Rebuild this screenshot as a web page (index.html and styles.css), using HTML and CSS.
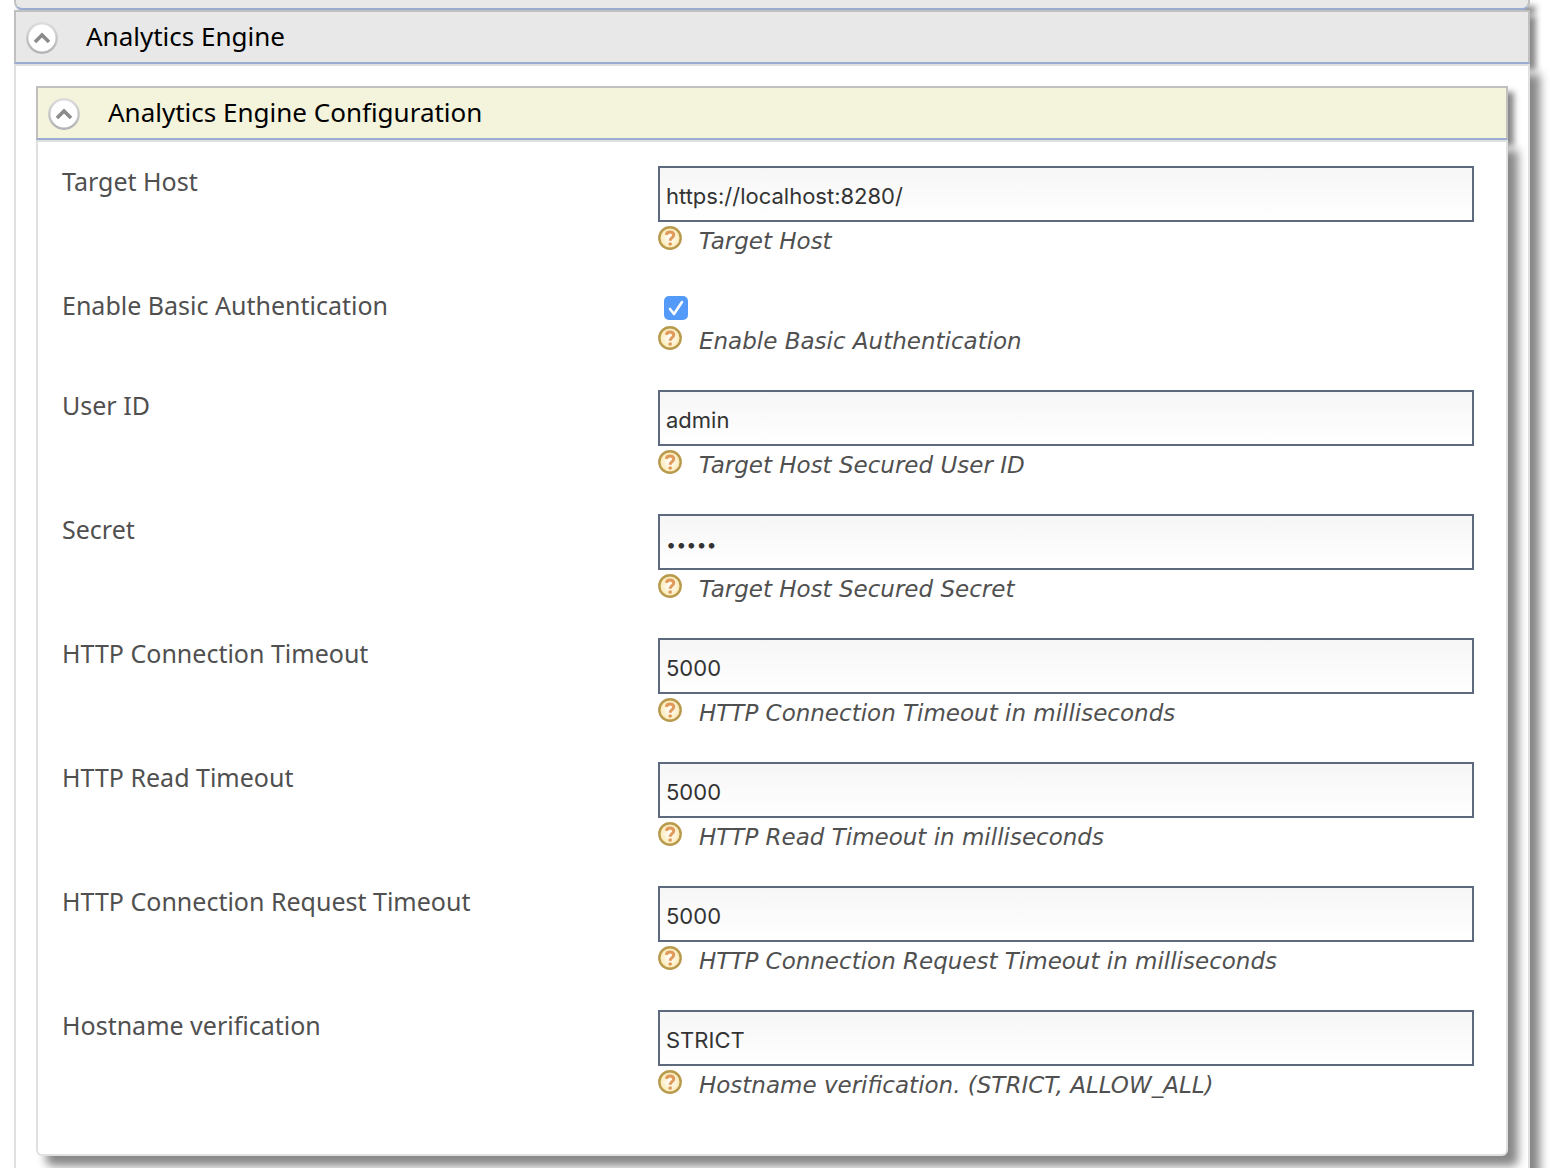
FILE: index.html
```
<!DOCTYPE html>
<html lang="en">
<head>
<meta charset="utf-8">
<title>Analytics Engine</title>
<link rel="stylesheet" href="styles.css">
</head>
<body>
<svg class="sprite" aria-hidden="true">
  <defs>
    <linearGradient id="ring" x1="0" y1="0" x2="0" y2="1"><stop offset="0" stop-color="#dcdcdc"/><stop offset="1" stop-color="#b2b3b6"/></linearGradient>
    <radialGradient id="gold"><stop offset="0" stop-color="#fff"/><stop offset="1" stop-color="#fbe9b0"/></radialGradient>
  </defs>
  <symbol id="collapse" viewBox="0 0 32 32">
    <circle cx="16" cy="16" r="14.7" fill="#fff" stroke="url(#ring)" stroke-width="2.4"/>
    <path d="M9 20 16 13 23 20" fill="none" stroke="#8b8b8b" stroke-width="3.6"/>
  </symbol>
  <symbol id="help" viewBox="0 0 24 24">
    <circle cx="12" cy="12" r="10.7" fill="url(#gold)" stroke="#b89a4c" stroke-width="2.4"/>
    <path d="M8.4 8.8C8.7 4.9 15.7 4.9 15.7 9 15.7 11.7 12.3 11.6 12.3 14.7" fill="none" stroke="#e09a5c" stroke-width="3"/>
    <circle cx="12.2" cy="18" r="1.8" fill="#e09a5c"/>
  </symbol>
</svg>
<main class="page">
  <div class="previous"></div>
  <section>
    <header class="bar">
      <button class="toggle" type="button" aria-label="Collapse Analytics Engine"><svg><use href="#collapse"/></svg></button>
      <h1 class="title">Analytics Engine</h1>
    </header>
    <div class="panel outer">
      <section>
        <header class="bar bar-sub">
          <button class="toggle" type="button" aria-label="Collapse Analytics Engine Configuration"><svg><use href="#collapse"/></svg></button>
          <h2 class="title">Analytics Engine Configuration</h2>
        </header>
        <form class="panel form">
          <div class="row">
            <label class="label" for="host">Target Host</label>
            <div class="field"><input class="text" id="host" type="text" value="https://localhost:8280/"><p class="hint"><svg class="help"><use href="#help"/></svg>Target Host</p></div>
          </div>
          <div class="row">
            <label class="label" for="auth">Enable Basic Authentication</label>
            <div class="field"><div class="check-line"><input class="check" id="auth" type="checkbox" checked></div><p class="hint"><svg class="help"><use href="#help"/></svg>Enable Basic Authentication</p></div>
          </div>
          <div class="row">
            <label class="label" for="user">User ID</label>
            <div class="field"><input class="text" id="user" type="text" value="admin"><p class="hint"><svg class="help"><use href="#help"/></svg>Target Host Secured User ID</p></div>
          </div>
          <div class="row">
            <label class="label" for="secret">Secret</label>
            <div class="field"><input class="text secret" id="secret" type="password" value="admin"><p class="hint"><svg class="help"><use href="#help"/></svg>Target Host Secured Secret</p></div>
          </div>
          <div class="row">
            <label class="label" for="connect">HTTP Connection Timeout</label>
            <div class="field"><input class="text" id="connect" type="text" value="5000"><p class="hint"><svg class="help"><use href="#help"/></svg>HTTP Connection Timeout in milliseconds</p></div>
          </div>
          <div class="row">
            <label class="label" for="read">HTTP Read Timeout</label>
            <div class="field"><input class="text" id="read" type="text" value="5000"><p class="hint"><svg class="help"><use href="#help"/></svg>HTTP Read Timeout in milliseconds</p></div>
          </div>
          <div class="row">
            <label class="label" for="request">HTTP Connection Request Timeout</label>
            <div class="field"><input class="text" id="request" type="text" value="5000"><p class="hint"><svg class="help"><use href="#help"/></svg>HTTP Connection Request Timeout in milliseconds</p></div>
          </div>
          <div class="row">
            <label class="label" for="verify">Hostname verification</label>
            <div class="field"><input class="text" id="verify" type="text" value="STRICT"><p class="hint"><svg class="help"><use href="#help"/></svg>Hostname verification. (STRICT, ALLOW_ALL)</p></div>
          </div>
        </form>
      </section>
    </div>
  </section>
</main>
</body>
</html>
```
FILE: styles.css
```
* { box-sizing: border-box; }

body {
  margin: 0;
  height: 100vh;
  overflow: hidden;
  background: #fff;
  color: #505050;
  font-family: "Noto Sans", "Open Sans", sans-serif;
  font-size: 25px;
  line-height: 30px;
}

.sprite { position: absolute; width: 0; height: 0; }

.page { padding: 0 20px 0 14px; }

.previous {
  height: 10px;
  border: 2px solid #c0c0c0;
  border-top: 0;
  border-bottom-color: #9aaccf;
  border-radius: 0 0 8px 8px;
  background: #e8e8e8;
  box-shadow: 6px 6px 6px #888;
}

.bar {
  position: relative;
  display: flex;
  align-items: flex-start;
  gap: 28px;
  height: 54px;
  padding: 10px;
  border: 2px solid #c0c0c0;
  border-bottom-color: #9aaccf;
  background: #e8e8e8;
  box-shadow: 6px 6px 6px #888;
}

.bar-sub { background: #f4f4dc; }

.toggle {
  width: 32px;
  height: 32px;
  padding: 0;
  border: 0;
  background: none;
}

.toggle svg { display: block; width: 32px; height: 32px; }

.title {
  margin: 0;
  color: #000;
  font-size: 26px;
  font-weight: 400;
  line-height: 28px;
}

.panel {
  position: relative;
  border: 2px solid #e0e0e0;
  border-radius: 0 0 6px 6px;
  background: #fff;
  box-shadow: 10px 10px 10px #888;
}

.outer { padding: 20px; }

.form {
  display: flex;
  flex-direction: column;
  gap: 32px;
  padding: 24px 32px 52px 24px;
}

.row { display: grid; grid-template-columns: 149fr 204fr; align-items: start; }

.field { display: flex; flex-direction: column; gap: 4px; }

.text {
  width: 100%;
  height: 56px;
  padding: 4px 6px 0;
  border: 2px solid #5d6a7e;
  border-radius: 0;
  background: linear-gradient(#f6f6f6, #fff);
  color: #333;
  font-family: Inter, Roboto, sans-serif;
  font-size: 22px;
}

.secret { font-size: 18px; }

.check-line { display: flex; height: 32px; padding: 6px; }

.check {
  appearance: none;
  width: 24px;
  height: 24px;
  margin: 0;
  border-radius: 5px;
  background: #549af8 url("data:image/svg+xml,%3Csvg xmlns='http://www.w3.org/2000/svg' viewBox='0 0 24 24'%3E%3Cpath d='M6 13 10 18 18 6' fill='none' stroke='white' stroke-width='2.6' stroke-linecap='round' stroke-linejoin='round'/%3E%3C/svg%3E");
}

.hint {
  display: flex;
  gap: 17px;
  min-height: 32px;
  margin: 0;
  font-family: "DejaVu Sans", sans-serif;
  font-size: 23px;
  font-style: italic;
}

.help { flex: none; width: 24px; height: 24px; }
```
